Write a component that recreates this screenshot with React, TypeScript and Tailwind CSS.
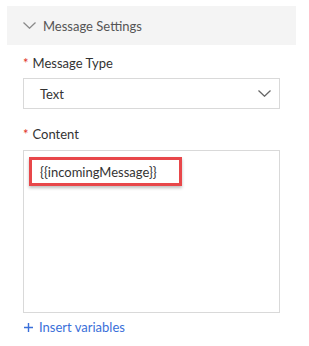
function Chevron({ className }: { className?: string }) {
  return (
    <svg width="13" height="7" viewBox="0 0 13 7" fill="none" className={className}>
      <polyline points="0.5,0.5 6.5,6.2 12.5,0.5" stroke="currentColor" strokeWidth="1.3" />
    </svg>
  )
}

export default function App() {
  return (
    <div className="h-[346px] w-[309px] bg-white pt-[6px] font-['Lato',sans-serif] text-[13px] leading-[18px] text-[#333]">
      <div className="ml-[7px] flex h-[39px] w-[289px] items-center bg-[#f4f4f4] pl-[16px]">
        <Chevron className="text-[#8a8a8a]" />
        <span className="ml-[7px] text-[#555]">Message Settings</span>
      </div>

      <div className="ml-[23px] w-[257px]">
        <div className="mt-[9px] flex h-[18px] items-center">
          <span className="mr-[4px] text-[#e0301e]">*</span>
          <span>Message Type</span>
        </div>
        <div className="mt-[6px] flex h-[31px] items-center justify-between border border-[#d9d9d9] pl-[16px] pr-[8px]">
          <span>Text</span>
          <Chevron className="text-[#666]" />
        </div>

        <div className="mt-[16px] flex h-[18px] items-center">
          <span className="mr-[4px] text-[#e0301e]">*</span>
          <span>Content</span>
        </div>
        <div className="mt-[7px] h-[163px] border border-[#d9d9d9] pl-[5px] pt-[6px]">
          <div className="flex h-[29px] w-[153px] items-center border-[3px] border-[#e8474a] pl-[8px] shadow-[0_2px_3px_rgba(0,0,0,0.25)]">
            {'{{incomingMessage}}'}
          </div>
        </div>

        <button className="mt-[6px] flex h-[16px] items-center text-[#3a6fd9]">
          <svg width="9" height="9" viewBox="0 0 9 9" className="ml-[1px]">
            <path d="M4.5 0V9M0 4.5H9" stroke="currentColor" strokeWidth="1.4" />
          </svg>
          <span className="ml-[6px]">Insert variables</span>
        </button>
      </div>
    </div>
  )
}
